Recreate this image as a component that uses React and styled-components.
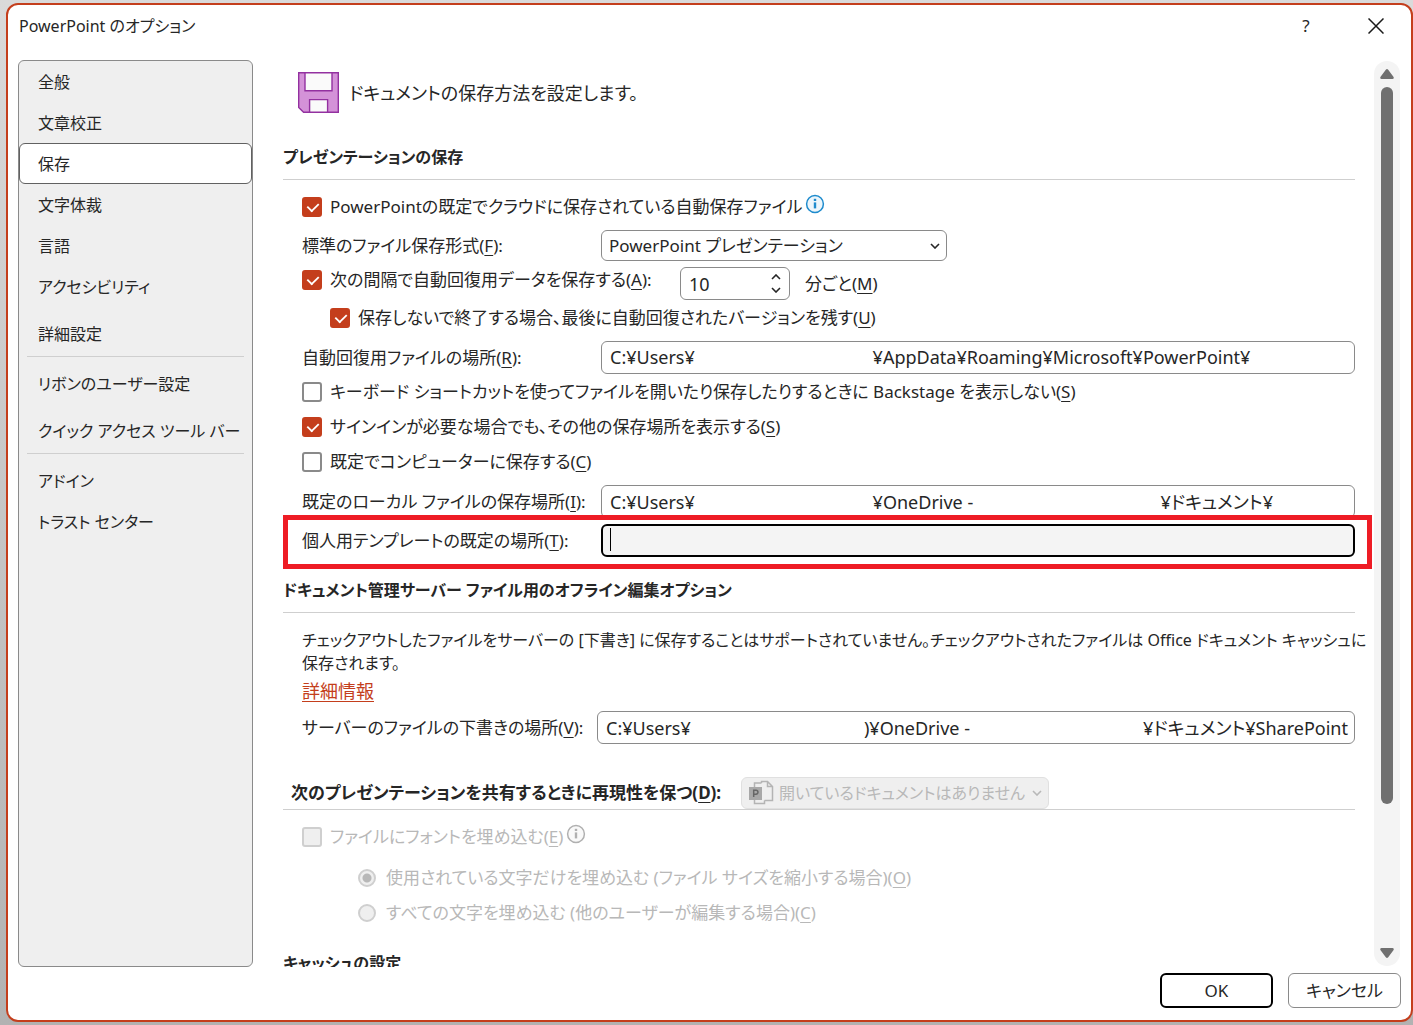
import React, { useState } from "react";
import styled, { createGlobalStyle, css } from "styled-components";

const sp = (n) => " ".repeat(n);

const navGroups = [
  ["全般", "文章校正", "保存", "文字体裁", "言語", "アクセシビリティ", "詳細設定"],
  ["リボンのユーザー設定", "クイック アクセス ツール バー"],
  ["アドイン", "トラスト センター"],
];
const spacedItems = ["詳細設定", "クイック アクセス ツール バー"];

const Chevron = () => (
  <svg width="10" height="6" viewBox="0 0 10 6" fill="none" stroke="currentColor" strokeWidth="1.6">
    <path d="M1 1l4 4 4-4" />
  </svg>
);

const InfoIcon = () => (
  <svg width="20" height="20" viewBox="0 0 20 20" fill="none" stroke="currentColor">
    <circle cx="10" cy="10" r="8.4" strokeWidth="1.5" fill="currentColor" fillOpacity="0.08" />
    <path d="M10 8.4v6" strokeWidth="2.4" />
    <path d="M10 4.8v2.2" strokeWidth="2.4" />
  </svg>
);

const FloppyIcon = () => (
  <svg width="41" height="41" viewBox="0 0 41 41" stroke="#9331a0" strokeWidth="1.4">
    <path d="M.7.7h39.6v39.6H5.6L.7 35.4z" fill="#d492d8" />
    <path d="M7 .7h27v18H7z" fill="#fafafa" />
    <path d="M11.6 27.6h18v12.7h-18z" fill="#fafafa" />
  </svg>
);

const DocumentIcon = () => (
  <svg width="26" height="26" viewBox="0 0 26 26" fill="none" stroke="#b4b4b4" strokeWidth="1.5">
    <path d="M6.500 7V3h7M6.500 20v3.500h10V20.500" />
    <path d="M13.500 3V1.500h6l5 5v14h-8M19.500 1.500v5h5" />
    <rect x="1" y="7" width="13" height="13" fill="#a8a8a8" stroke="none" />
    <path d="M5.700 17V10.300H8a1.900 1.900 0 0 1 0 3.900H5.700" stroke="#666" />
  </svg>
);

const App = () => {
  const [current, setCurrent] = useState("保存");

  return (
    <Desktop>
      <GlobalStyle />
      <Dialog>
        <TitleBar>
          <Title>PowerPoint のオプション</Title>
          <TitleButton aria-label="ヘルプ">?</TitleButton>
          <TitleButton aria-label="閉じる">
            <svg width="16" height="16" viewBox="0 0 16 16" stroke="#1a1a1a" strokeWidth="1.5">
              <path d="M.5.5l15 15M15.500.5l-15 15" />
            </svg>
          </TitleButton>
        </TitleBar>

        <Body>
          <Nav>
            {navGroups.map((group, index) => (
              <NavGroup key={index}>
                {group.map((item) => (
                  <NavItem
                    key={item}
                    $active={item === current}
                    $spaced={spacedItems.includes(item)}
                    onClick={() => setCurrent(item)}
                  >
                    {item}
                  </NavItem>
                ))}
              </NavGroup>
            ))}
          </Nav>

          <Content>
            <PageHeader>
              <FloppyIcon />
              <PageTitle>ドキュメントの保存方法を設定します。</PageTitle>
            </PageHeader>

            <SectionTitle $gap={31}>プレゼンテーションの保存</SectionTitle>
            <Section $top={9}>
              <CheckRow>
                <CheckBox defaultChecked />
                <span>PowerPointの既定でクラウドに保存されている自動保存ファイル</span>
                <InfoMark>
                  <InfoIcon />
                </InfoMark>
              </CheckRow>
              <FieldRow>
                <FieldLabel htmlFor="format">
                  標準のファイル保存形式(<u>F</u>):
                </FieldLabel>
                <SelectBox>
                  <Select id="format">
                    <option>PowerPoint プレゼンテーション</option>
                  </Select>
                  <Chevron />
                </SelectBox>
              </FieldRow>
              <FieldRow>
                <IntervalLabel>
                  <CheckBox defaultChecked />
                  <span>
                    次の間隔で自動回復用データを保存する(<u>A</u>):
                  </span>
                </IntervalLabel>
                <Spinner>
                  <SpinInput id="minutes" defaultValue="10" />
                  <SpinButtons>
                    <SpinButton aria-label="増やす" $up>
                      <Chevron />
                    </SpinButton>
                    <SpinButton aria-label="減らす">
                      <Chevron />
                    </SpinButton>
                  </SpinButtons>
                </Spinner>
                <label htmlFor="minutes">
                  分ごと(<u>M</u>)
                </label>
              </FieldRow>
              <CheckRow $indent={28}>
                <CheckBox defaultChecked />
                <span>
                  保存しないで終了する場合、最後に自動回復されたバージョンを残す(<u>U</u>)
                </span>
              </CheckRow>
              <FieldRow>
                <FieldLabel htmlFor="recovery">
                  自動回復用ファイルの場所(<u>R</u>):
                </FieldLabel>
                <TextInput
                  id="recovery"
                  defaultValue={`C:¥Users¥${sp(38)}¥AppData¥Roaming¥Microsoft¥PowerPoint¥`}
                />
              </FieldRow>
              <CheckRow>
                <CheckBox />
                <span>
                  キーボード ショートカットを使ってファイルを開いたり保存したりするときに Backstage を表示しない(<u>S</u>)
                </span>
              </CheckRow>
              <CheckRow>
                <CheckBox defaultChecked />
                <span>
                  サインインが必要な場合でも、その他の保存場所を表示する(<u>S</u>)
                </span>
              </CheckRow>
              <CheckRow>
                <CheckBox />
                <span>
                  既定でコンピューターに保存する(<u>C</u>)
                </span>
              </CheckRow>
              <FieldRow>
                <FieldLabel htmlFor="local">
                  既定のローカル ファイルの保存場所(<u>I</u>):
                </FieldLabel>
                <TextInput
                  id="local"
                  defaultValue={`C:¥Users¥${sp(38)}¥OneDrive -${sp(40)}¥ドキュメント¥`}
                />
              </FieldRow>
              <FieldRow $highlight>
                <FieldLabel htmlFor="template">
                  個人用テンプレートの既定の場所(<u>T</u>):
                </FieldLabel>
                <FocusedField>
                  <TextInput id="template" $focused />
                </FocusedField>
              </FieldRow>
            </Section>

            <SectionTitle $gap={20}>
              ドキュメント管理サーバー ファイル用のオフライン編集オプション
            </SectionTitle>
            <Section $top={16}>
              <Note>
                チェックアウトしたファイルをサーバーの [下書き] に保存することはサポートされていません。チェックアウトされたファイルは
                Office ドキュメント キャッシュに
                <br />
                保存されます。
              </Note>
              <DetailLink href="#details">詳細情報</DetailLink>
              <FieldRow $gap={8}>
                <FieldLabel htmlFor="drafts" $narrow>
                  サーバーのファイルの下書きの場所(<u>V</u>):
                </FieldLabel>
                <TextInput
                  id="drafts"
                  defaultValue={`C:¥Users¥${sp(37)})¥OneDrive -${sp(37)}¥ドキュメント¥SharePoint`}
                />
              </FieldRow>
            </Section>

            <ShareHeader>
              <ShareTitle>
                <label htmlFor="share">
                  次のプレゼンテーションを共有するときに再現性を保つ(<u>D</u>):
                </label>
              </ShareTitle>
              <SelectBox $disabled>
                <DocumentIcon />
                <Select id="share" disabled>
                  <option>開いているドキュメントはありません</option>
                </Select>
                <Chevron />
              </SelectBox>
            </ShareHeader>
            <Section $top={9}>
              <CheckRow $disabled>
                <CheckBox disabled />
                <span>
                  ファイルにフォントを埋め込む(<u>E</u>)
                </span>
                <InfoMark $disabled>
                  <InfoIcon />
                </InfoMark>
              </CheckRow>
              <RadioGroup>
                <CheckRow $disabled $indent={56}>
                  <Radio name="embed" defaultChecked disabled />
                  <span>
                    使用されている文字だけを埋め込む (ファイル サイズを縮小する場合)(<u>O</u>)
                  </span>
                </CheckRow>
                <CheckRow $disabled $indent={56}>
                  <Radio name="embed" disabled />
                  <span>
                    すべての文字を埋め込む (他のユーザーが編集する場合)(<u>C</u>)
                  </span>
                </CheckRow>
              </RadioGroup>
            </Section>

            <SectionTitle $gap={20}>キャッシュの設定</SectionTitle>
          </Content>

          <ScrollBar>
            <Arrow />
            <Rail>
              <Thumb />
            </Rail>
            <Arrow $down />
          </ScrollBar>
        </Body>

        <Footer>
          <FooterButton $primary>OK</FooterButton>
          <FooterButton>キャンセル</FooterButton>
        </Footer>
      </Dialog>
    </Desktop>
  );
};

const Arrow = ({ $down }) => (
  <ArrowButton aria-label={$down ? "下へ" : "上へ"} $down={$down}>
    <svg width="14" height="10" viewBox="0 0 14 10" fill="#707070">
      <path d="M5.800.8Q7-.8 8.200.8L13.600 8Q14.200 10 12.400 10H1.600Q-.2 10 .4 8z" />
    </svg>
  </ArrowButton>
);

const GlobalStyle = createGlobalStyle`
  * {
    box-sizing: border-box;
  }
  body {
    margin: 0;
    font-family: "Noto Sans", "Noto Sans CJK JP", sans-serif;
    font-size: 17px;
    font-feature-settings: "palt";
    line-height: 26px;
    color: #262626;
  }
  button, input, select {
    font: inherit;
    font-feature-settings: inherit;
    color: inherit;
  }
  button {
    padding: 0;
    border: none;
    background: none;
  }
  svg {
    flex: none;
    display: block;
  }
  u {
    text-underline-offset: 3px;
  }
`;

const Desktop = styled.div`
  display: flex;
  height: 100vh;
  padding: 3px 0 3px 6px;
  background: linear-gradient(#dadada, #b2b2b2);
`;
const Dialog = styled.div`
  flex: 1;
  min-width: 0;
  display: flex;
  flex-direction: column;
  border: 2px solid #c43e1c;
  border-radius: 12px;
  background: #fff;
`;
const TitleBar = styled.header`
  display: flex;
  align-items: center;
  height: 42px;
  margin-bottom: 13px;
  padding: 0 11px;
`;
const Title = styled.h1`
  flex: 1;
  margin: 0;
  font-size: 16px;
  font-weight: 400;
`;
const TitleButton = styled.button`
  display: flex;
  align-items: center;
  justify-content: center;
  width: 48px;
  height: 32px;
  & + & {
    margin-left: 22px;
  }
`;
const Body = styled.div`
  flex: 1;
  min-height: 0;
  display: flex;
  padding: 0 11px 0 10px;
`;
const Nav = styled.nav`
  width: 235px;
  margin-right: 30px;
  border: 1px solid #8a8a8a;
  border-radius: 6px;
  background: #efefef;
`;
const NavGroup = styled.div`
  display: flex;
  flex-direction: column;
  & + & {
    margin-top: 2px;
    padding-top: 7px;
    background: linear-gradient(#cfcfcf, #cfcfcf) 8px 0 / calc(100% - 16px) 1px no-repeat;
  }
`;
const NavItem = styled.button`
  height: 41px;
  margin-top: ${(props) => (props.$spaced ? "6px" : "0")};
  padding-left: 18px;
  border: 1px solid ${(props) => (props.$active ? "#616161" : "transparent")};
  border-radius: 6px;
  background: ${(props) => (props.$active ? "#fff" : "transparent")};
  font-size: 16px;
  text-align: left;
  white-space: nowrap;
`;
const Content = styled.main`
  flex: 1;
  min-width: 0;
  overflow: hidden;
  padding-right: 19px;
`;
const PageHeader = styled.div`
  display: flex;
  align-items: center;
  gap: 10px;
  padding: 12px 0 0 15px;
`;
const PageTitle = styled.p`
  margin: 0;
  font-size: 18px;
`;
const SectionTitle = styled.h2`
  margin: ${(props) => props.$gap}px 0 0;
  padding-bottom: 9px;
  border-bottom: 1px solid #cfcfcf;
  font-size: 16px;
`;
const Section = styled.section`
  padding: ${(props) => props.$top}px 0 0 19px;
`;
const CheckRow = styled.label`
  display: flex;
  align-items: center;
  gap: 8px;
  height: 35px;
  padding-left: ${(props) => props.$indent || 0}px;
  white-space: nowrap;
  color: ${(props) => (props.$disabled ? "#b8b8b8" : "inherit")};
`;
const RadioGroup = styled.div`
  padding-top: 6px;
`;
const FieldRow = styled.div`
  position: relative;
  display: flex;
  align-items: center;
  margin-top: ${(props) => props.$gap || 6}px;
  white-space: nowrap;
  ${(props) =>
    props.$highlight &&
    css`
      &::after {
        content: "";
        position: absolute;
        inset: -9px -17px -12px -19px;
        border: 5px solid #ee1c25;
        pointer-events: none;
      }
    `}
`;
const FieldLabel = styled.label`
  width: ${(props) => (props.$narrow ? "295px" : "299px")};
`;
const IntervalLabel = styled.label`
  display: flex;
  align-items: center;
  align-self: flex-start;
  gap: 8px;
  width: 378px;
`;
const CheckBox = styled.input.attrs({ type: "checkbox" })`
  appearance: none;
  flex: none;
  width: 20px;
  height: 20px;
  margin: 0;
  border: 2px solid #8a8a8a;
  border-radius: 3px;
  background: #fff;
  &:checked {
    border-color: #c43e1c;
    background: #c43e1c;
  }
  &:checked::before {
    content: "";
    display: block;
    width: 10px;
    height: 6px;
    margin: 3px;
    border: solid #fff;
    border-width: 0 0 2px 2px;
    transform: rotate(-45deg) scale(0.9);
  }
  &:disabled {
    border-color: #cfcfcf;
    background: #efefef;
  }
`;
const Radio = styled.input.attrs({ type: "radio" })`
  appearance: none;
  flex: none;
  width: 18px;
  height: 18px;
  margin: 0 2px 0 0;
  border: 2px solid #cfcfcf;
  border-radius: 50%;
  background: #efefef;
  &:checked {
    background: radial-gradient(circle, #b8b8b8 4px, #efefef 5px);
  }
`;
const InfoMark = styled.span`
  align-self: flex-start;
  margin: 5px 0 0 -5px;
  color: ${(props) => (props.$disabled ? "#b0b0b0" : "#1e8bcd")};
`;
const SelectBox = styled.div`
  position: relative;
  width: ${(props) => (props.$disabled ? "308px" : "346px")};
  color: ${(props) => (props.$disabled ? "#b8b8b8" : "inherit")};
  svg {
    position: absolute;
    right: 7px;
    top: 13px;
    pointer-events: none;
  }
  svg:first-child {
    right: auto;
    left: 7px;
    top: 3px;
  }
`;
const Select = styled.select`
  appearance: none;
  display: block;
  width: 100%;
  height: 31px;
  padding: 0 24px 0 7px;
  border: 1px solid #8a8a8a;
  border-radius: 6px;
  background: #fff;
  &:disabled {
    height: 32px;
    padding: 0 18px 0 37px;
    border-color: #e0e0e0;
    background: #efefef;
    font-size: 16px;
    opacity: 1;
  }
`;
const Spinner = styled.div`
  display: flex;
  width: 110px;
  height: 33px;
  margin-right: 15px;
  border: 1px solid #8a8a8a;
  border-radius: 6px;
`;
const SpinInput = styled.input`
  flex: 1;
  min-width: 0;
  padding: 0 8px;
  border: none;
  background: none;
  font-size: 18px;
`;
const SpinButtons = styled.div`
  display: flex;
  flex-direction: column;
  justify-content: space-around;
  padding: 2px 8px;
`;
const SpinButton = styled.button`
  transform: ${(props) => (props.$up ? "rotate(180deg)" : "none")};
`;
const TextInput = styled.input.attrs({ type: "text" })`
  flex: 1;
  width: 100%;
  min-width: 0;
  height: 33px;
  padding: 0 4px 2px 8px;
  border: 1px solid #8a8a8a;
  border-radius: 6px;
  background: #fff;
  font-size: 18px;
  ${(props) =>
    props.$focused &&
    css`
      border: 2px solid #000;
      background: #f4f4f4;
    `}
`;
const FocusedField = styled.div`
  position: relative;
  flex: 1;
  display: flex;
  &::after {
    content: "";
    position: absolute;
    left: 9px;
    top: 4px;
    width: 1px;
    height: 23px;
    background: #000;
  }
`;
const Note = styled.p`
  margin: 0;
  font-size: 16px;
  line-height: 23px;
  white-space: nowrap;
`;
const DetailLink = styled.a`
  display: block;
  width: fit-content;
  margin-top: 5px;
  font-size: 18px;
  line-height: 23px;
  color: #c43e1c;
  text-underline-offset: 3px;
`;
const ShareHeader = styled.div`
  display: flex;
  align-items: center;
  margin-top: 33px;
  padding-left: 8px;
  border-bottom: 1px solid #cfcfcf;
  white-space: nowrap;
`;
const ShareTitle = styled.h2`
  width: 450px;
  margin: 0;
  font-size: 17px;
`;
const ScrollBar = styled.div`
  display: flex;
  flex-direction: column;
  align-items: center;
  gap: 8px;
  width: 26px;
  margin: 1px 0;
  padding: 8px 0;
  border-radius: 13px;
  background: #f4f4f4;
`;
const ArrowButton = styled.button`
  transform: ${(props) => (props.$down ? "rotate(180deg)" : "none")};
`;
const Rail = styled.div`
  flex: 1;
  width: 12px;
`;
const Thumb = styled.div`
  height: 84%;
  border-radius: 6px;
  background: #707070;
`;
const Footer = styled.footer`
  display: flex;
  justify-content: flex-end;
  gap: 15px;
  padding: 6px 10px 12px;
`;
const FooterButton = styled.button`
  width: 113px;
  height: 35px;
  border: ${(props) => (props.$primary ? "2px solid #000" : "1px solid #8a8a8a")};
  border-radius: 6px;
  background: #fff;
`;

export default App;
